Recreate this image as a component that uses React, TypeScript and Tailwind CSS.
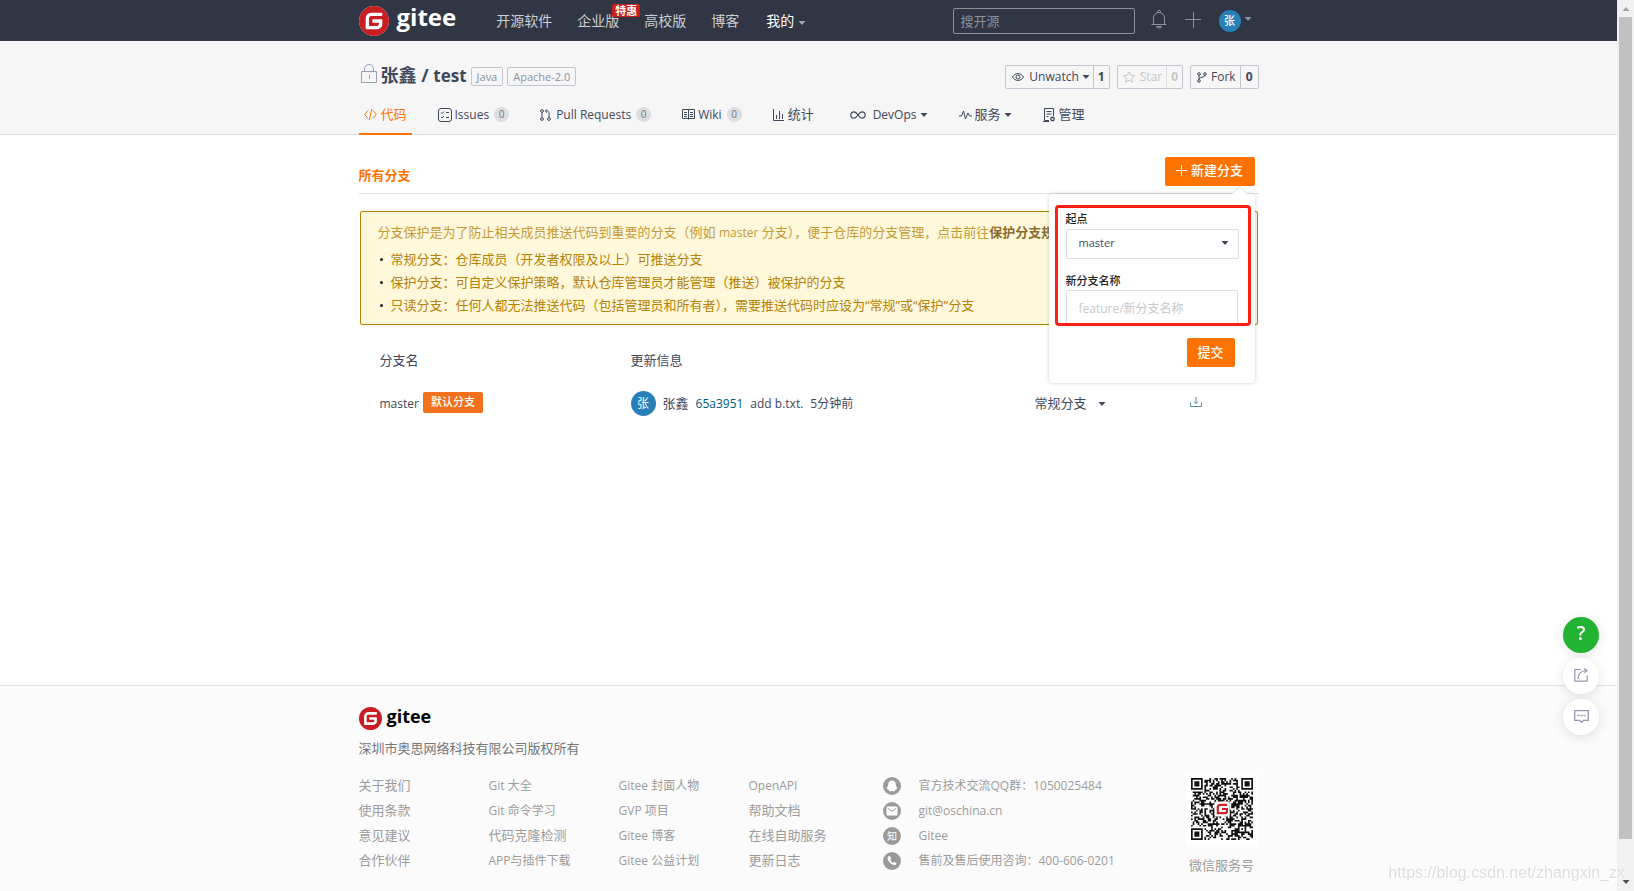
import React from 'react';
import { SiGitee } from 'react-icons/si';

const Caret: React.FC<{ className?: string }> = ({ className = '' }) => (
  <svg viewBox="0 0 8 4" className={`w-[8px] h-[4px] shrink-0 ${className}`} fill="currentColor" aria-hidden="true">
    <path d="M0.5 0h7L4 4z" />
  </svg>
);

type IconProps = { children: React.ReactNode; className?: string; box?: string };

const LineIcon: React.FC<IconProps> = ({ children, className = 'w-[14px] h-[14px]', box = '0 0 14 14' }) => (
  <svg viewBox={box} className={`shrink-0 ${className}`} fill="none" stroke="currentColor" strokeWidth="1" aria-hidden="true">
    {children}
  </svg>
);

const Logo: React.FC<{ mark: string; text: string }> = ({ mark, text }) => (
  <a href="#" className="flex items-center">
    <span className={`flex rounded-full bg-white text-[#c71d23] ${mark}`}>
      <SiGitee className="size-full" />
    </span>
    <span className={text}>gitee</span>
  </a>
);

const TopBar: React.FC = () => (
  <header className="bg-[#303643] text-[#ccced3]">
    <div className="mx-auto flex h-[41px] w-full max-w-[900px] items-center">
      <Logo mark="size-[30px]" text="ml-2 mb-2 text-2xl leading-6 font-bold text-white" />
      <nav className="ml-10 flex flex-1 items-center gap-[25px] text-sm">
        <a href="#">开源软件</a>
        <a href="#" className="relative">
          企业版
          <span className="absolute -top-[7px] left-[35px] rounded-xs bg-[#c71d23] px-[3px] text-[11px] leading-[13px] font-bold whitespace-nowrap text-white">
            特惠
          </span>
        </a>
        <a href="#">高校版</a>
        <a href="#">博客</a>
        <a href="#" className="ml-[2px] flex items-center gap-1 text-white">
          我的
          <Caret className="mt-1 text-[#a0a4ad]" />
        </a>
      </nav>
      <input
        type="text"
        aria-label="搜开源"
        placeholder="搜开源"
        className="h-[26px] w-[182px] rounded-xs border border-[#8c9098] bg-transparent px-[7px] text-[13px] placeholder:text-[#8c9098]"
      />
      <button aria-label="通知" className="ml-4 text-[#8c92a4]">
        <LineIcon className="mb-[2px] h-[19px] w-4" box="0 0 16 19">
          <path d="M.5 14.500h15M2.500 14.500V8a5.500 5.500 0 0 1 11 0v6.500M6.500 2.500V1.500a1.500 1 0 0 1 3 0v1M5.500 16.500a2.500 1.500 0 0 0 5 0z" />
        </LineIcon>
      </button>
      <button aria-label="新建" className="ml-[18px] text-[#8c92a4]">
        <LineIcon className="mb-[2px] size-4" box="0 0 16 16">
          <path d="M8.500 0v16M0 7.500h16" />
        </LineIcon>
      </button>
      <button aria-label="张鑫" className="ml-[18px] mr-[7px] flex items-center gap-[3px]">
        <span className="size-[22px] rounded-full bg-[#2980b9] text-center text-[11px] leading-[22px] font-medium text-white">张</span>
        <Caret className="mb-1 text-[#8c92a4]" />
      </button>
    </div>
  </header>
);

const RepoTitle: React.FC = () => (
  <div className="flex items-center pt-5">
    <LineIcon className="ml-[2px] mb-1 h-[19px] w-4 text-[#9aa0b3]" box="0 0 16 19">
      <path d="M.5 7.500h15v11H.5zM3.500 7.500V5a4.500 4.500 0 0 1 9 0v2.500M8.500 11v4" />
    </LineIcon>
    <h1 className="ml-1 text-lg leading-[26px] font-bold text-[#40485b]">
      <a href="#">张鑫</a> / <a href="#" className="text-[17px]">test</a>
    </h1>
    <span className="mt-[2px] ml-1 h-[19px] rounded-xs border border-[#c3c6d1] px-[5px] text-[11px] leading-[17px] text-[#8c92a4]">Java</span>
    <span className="mt-[2px] ml-1 h-[19px] rounded-xs border border-[#c3c6d1] px-[5px] text-[11px] leading-[17px] text-[#8c92a4]">
      Apache-2.0
    </span>
    <div className="mt-1 ml-auto flex gap-[7px] text-xs text-[#40485b]">
      <button className="flex h-6 items-center rounded-xs border border-[#c3c6d1]">
        <LineIcon className="mr-[5px] ml-[6px] h-2 w-3" box="0 0 12 8">
          <path d="M.5 4C3-.6 9-.6 11.500 4 9 8.600 3 8.600 .5 4z" />
          <circle cx="6" cy="4" r="2" />
        </LineIcon>
        <span>Unwatch</span>
        <Caret className="mx-[3px]" />
        <span className="flex h-full items-center border-l border-[#c3c6d1] px-1 font-bold">1</span>
      </button>
      <button disabled className="flex h-6 items-center rounded-xs border border-[#c3c6d1] text-[#c6c6c6]">
        <LineIcon className="mx-[5px] size-3" box="0 0 12 12">
          <path d="M6 .8l1.600 3.500 3.800.4-2.800 2.600.8 3.800L6 9.200l-3.400 1.900.8-3.800L.6 4.700l3.800-.4z" />
        </LineIcon>
        <span className="mr-1">Star</span>
        <span className="flex h-full items-center border-l border-[#dddee3] px-1 font-bold">0</span>
      </button>
      <button className="flex h-6 items-center rounded-xs border border-[#c3c6d1]">
        <LineIcon className="mr-1 ml-[6px] h-[11px] w-[10px]" box="0 0 10 11">
          <circle cx="2" cy="2" r="1.300" />
          <circle cx="8" cy="2" r="1.300" />
          <circle cx="2" cy="9" r="1.300" />
          <path d="M2 3.300v4.400M8 3.300c0 2.500-6 1.400-6 4" />
        </LineIcon>
        <span className="mr-1">Fork</span>
        <span className="flex h-full items-center border-l border-[#c3c6d1] px-[5px] font-bold">0</span>
      </button>
    </div>
  </div>
);

type Tab = { label: string; icon: React.ReactNode; latin?: boolean; count?: number; menu?: boolean };

const tabs: Tab[] = [
  {
    label: 'Issues',
    latin: true,
    count: 0,
    icon: (
      <LineIcon>
        <rect x=".5" y=".5" width="13" height="13" rx="2.500" />
        <path d="M3 4.500l1 1 2-2M8 4.500h3M3 9l1 1 2-2M8 9.500h3" />
      </LineIcon>
    ),
  },
  {
    label: 'Pull Requests',
    latin: true,
    count: 0,
    icon: (
      <LineIcon className="mr-[2px] h-3 w-[11px]" box="0 0 11 12">
        <circle cx="2" cy="2" r="1.400" />
        <circle cx="2" cy="10" r="1.400" />
        <circle cx="9" cy="10" r="1.400" />
        <path d="M2 3.500v5M9 8.500v-5c0-1-1-1.500-2-1.500H5.500M7 .3L5.300 2 7 3.700" />
      </LineIcon>
    ),
  },
  {
    label: 'Wiki',
    latin: true,
    count: 0,
    icon: (
      <LineIcon className="h-[11px] w-[13px]" box="0 0 13 11">
        <path d="M.5 .5h12v9H.5zM6.500 .5v10M2 3.500h3M2 5.500h3M2 7.500h3M8 3.500h3M8 5.500h3M8 7.500h3" />
      </LineIcon>
    ),
  },
  {
    label: '统计',
    icon: (
      <LineIcon className="mr-[1px] h-3 w-[11px]" box="0 0 11 12">
        <path d="M.5 0v11.500H11M3.500 6v4M6.500 2v8M9.500 5v5" />
      </LineIcon>
    ),
  },
  {
    label: 'DevOps',
    latin: true,
    menu: true,
    icon: (
      <LineIcon className="mr-1 ml-[5px] h-2 w-4" box="0 0 16 8">
        <path d="M8 4C6 1 5 .8 4 .8a3.200 3.200 0 0 0 0 6.400C5 7.200 6 7 8 4s3-3.200 4-3.200a3.200 3.200 0 0 1 0 6.400C11 7.200 10 7 8 4z" strokeWidth="1.200" />
      </LineIcon>
    ),
  },
  {
    label: '服务',
    menu: true,
    icon: (
      <LineIcon className="h-[10px] w-[13px]" box="0 0 13 10">
        <path d="M0 6h2.500l2-5 2 8 2.500-6 1.500 3H13" />
      </LineIcon>
    ),
  },
  {
    label: '管理',
    icon: (
      <LineIcon className="mr-[1px] h-[14px] w-3" box="0 0 12 14">
        <path d="M10.500 8V.5h-9v12H6M3.500 3.500h5M3.500 6h5M3.500 8.500h2M0 13.500h6" />
        <circle cx="9.500" cy="11" r="1.700" strokeWidth="1.400" />
      </LineIcon>
    ),
  },
];

const RepoTabs: React.FC = () => (
  <nav className="mt-[7px] flex text-[13px] text-[#40485b]">
    <a href="#" className="-mb-px flex h-[39px] items-center gap-1 border-b-2 border-[#fe7300] px-[5px] text-[#fe7300]">
      <LineIcon className="h-[11px] w-[13px]" box="0 0 13 11">
        <path d="M4 1.500L.7 5.500 4 9.500M9 1.500l3.300 4L9 9.500M7.800 0L5.200 11" />
      </LineIcon>
      代码
    </a>
    <div className="ml-[26px] flex gap-[31px]">
      {tabs.map((tab) => (
        <a key={tab.label} href="#" className="flex h-[37px] items-center gap-[3px]">
          {tab.icon}
          <span className={tab.latin ? 'text-xs' : ''}>{tab.label}</span>
          {tab.count !== undefined && (
            <span className="ml-[2px] size-[15px] rounded-full bg-[#dddee0] text-center text-[10px] leading-[15px] text-[#72788c]">
              {tab.count}
            </span>
          )}
          {tab.menu && <Caret />}
        </a>
      ))}
    </div>
  </nav>
);

const NewBranchPopup: React.FC = () => (
  <form className="absolute top-[37px] right-0 z-10 w-[206px] rounded-sm bg-white p-4 pt-[17px] pl-[17px] text-[#40485b] shadow-[0_0_4px_rgba(0,0,0,0.18)]">
    <span className="absolute -top-[6px] right-[10px] size-[11px] rotate-45 border-t border-l border-[#dfe2e8] bg-white" />
    <label htmlFor="start" className="block text-[11px] leading-[15px] font-medium text-[#222]">
      起点
    </label>
    <div className="relative mt-[3px]">
      <select
        id="start"
        className="block h-[30px] w-full appearance-none rounded-xs border border-[#dcdde5] bg-white pb-[2px] pl-3 text-[11px]"
      >
        <option>master</option>
      </select>
      <Caret className="pointer-events-none absolute top-3 right-[10px]" />
    </div>
    <label htmlFor="branch-name" className="mt-[14px] block text-[11px] leading-[15px] font-medium text-[#222]">
      新分支名称
    </label>
    <input
      id="branch-name"
      type="text"
      placeholder="feature/新分支名称"
      className="mt-[2px] block h-[36px] w-[172px] rounded-xs border border-[#dcdde5] px-3 text-xs placeholder:text-[#c8c8c8]"
    />
    <div className="pointer-events-none absolute top-[11px] right-1 left-[6px] h-[121px] rounded-sm border-3 border-[#ff1f14]" />
    <button type="button" className="mt-3 mr-1 ml-auto block h-[29px] w-12 rounded-xs bg-[#fe7300] text-[13px] font-medium text-white">
      提交
    </button>
  </form>
);

const rules = [
  '常规分支：仓库成员（开发者权限及以上）可推送分支',
  '保护分支：可自定义保护策略，默认仓库管理员才能管理（推送）被保护的分支',
  '只读分支：任何人都无法推送代码（包括管理员和所有者），需要推送代码时应设为“常规”或“保护”分支',
];

const BranchPage: React.FC = () => (
  <main className="mx-auto w-full max-w-[900px] flex-1 pt-[22px] pb-8 text-[13px] text-[#40485b]">
    <div className="flex items-start justify-between border-b border-[#d9e0e8] pb-[7px]">
      <h2 className="mt-2 leading-5 font-bold text-[#fe7300]">所有分支</h2>
      <div className="relative mr-1">
        <button className="flex h-[29px] w-[90px] items-center justify-center gap-1 rounded-xs bg-[#fe7300] pb-[2px] font-medium text-white">
          <LineIcon className="size-[11px]" box="0 0 11 11">
            <path d="M5.500 0v11M0 5.500h11" />
          </LineIcon>
          新建分支
        </button>
        <NewBranchPopup />
      </div>
    </div>

    <section className="mx-px mt-[17px] rounded-xs border border-[#b58105] bg-[#fff8db] px-[17px] pt-2 pb-[7px] text-[#b58105]">
      <p className="leading-6 text-[#c49a37]">
        分支保护是为了防止相关成员推送代码到重要的分支（例如 <span className="text-xs">master</span> 分支），便于仓库的分支管理，点击前往
        <a href="#" className="font-bold text-[#8c6d2c]">保护分支规则</a>
      </p>
      <ul className="mt-1">
        {rules.map((rule) => (
          <li key={rule} className="flex items-center leading-[23px]">
            <span className="mr-2 ml-[2px] size-[3px] rounded-full bg-[#222]" />
            {rule}
          </li>
        ))}
      </ul>
    </section>

    <table className="mt-[21px] w-full text-left">
      <thead>
        <tr className="h-[30px]">
          <th className="w-[272px] pl-[21px] font-normal">分支名</th>
          <th className="font-normal">更新信息</th>
          <th className="w-[155px]" aria-label="状态" />
          <th className="w-[69px]" aria-label="下载" />
        </tr>
      </thead>
      <tbody>
        <tr className="h-[56px]">
          <td className="pl-[21px]">
            <div className="flex items-center gap-1">
              <a href="#" className="text-xs">master</a>
              <span className="mb-1 h-[21px] rounded-xs bg-[#f2711c] px-2 text-[11px] leading-[20px] font-medium text-white">默认分支</span>
            </div>
          </td>
          <td>
            <div className="flex items-center gap-[7px]">
              <span className="mb-[2px] size-[25px] rounded-full bg-[#2980b9] text-center text-xs leading-[25px] text-white">张</span>
              <a href="#">张鑫</a>
              <a href="#" className="text-xs text-[#005980]">65a3951</a>
              <span className="text-xs">add b.txt.</span>
              <span className="text-xs">5分钟前</span>
            </div>
          </td>
          <td>
            <div className="relative w-[71px]">
              <select aria-label="分支状态" className="w-full appearance-none bg-transparent">
                <option>常规分支</option>
              </select>
              <Caret className="pointer-events-none absolute top-2 right-0" />
            </div>
          </td>
          <td>
            <button aria-label="下载" className="mb-1 block text-[#5b8c9e]">
              <LineIcon className="h-[10px] w-3" box="0 0 12 10">
                <path d="M.5 5.500v4h11v-4M6 0v6.500M4 4.500l2 2 2-2" />
              </LineIcon>
            </button>
          </td>
        </tr>
      </tbody>
    </table>
  </main>
);

const QR_SIZE = 37;

// finder squares sit in three corners, one alignment square in the fourth
const isDark = (x: number, y: number): boolean => {
  const corners = [[3, 3], [QR_SIZE - 4, 3], [3, QR_SIZE - 4]];
  for (const [cx, cy] of corners) {
    const d = Math.max(Math.abs(x - cx), Math.abs(y - cy));
    if (d <= 4) return d === 3 || d <= 1;
  }
  const a = Math.max(Math.abs(x - 30), Math.abs(y - 30));
  if (a <= 2) return a !== 1;
  const n = Math.sin(x * 127.1 + y * 311.7) * 43758.5453;
  return n - Math.floor(n) > 0.48;
};

const QrCode: React.FC = () => {
  let d = '';
  for (let y = 0; y < QR_SIZE; y++) {
    for (let x = 0; x < QR_SIZE; x++) {
      if (isDark(x, y)) d += `M${x} ${y}h1v1h-1z`;
    }
  }
  return (
    <svg viewBox="-3 -3 43 43" className="size-[72px] bg-white" role="img" aria-label="微信服务号">
      <path d={d} fill="#111" />
      <rect x="14" y="14" width="9" height="9" rx="1" fill="#fff" />
      <path d="M21.500 16h-4q-1.500 0-1.500 1.500V21h4q1.500 0 1.500-1.500v-1h-3" fill="none" stroke="#c9252d" strokeWidth="1.300" />
    </svg>
  );
};

const linkColumns = [
  ['关于我们', '使用条款', '意见建议', '合作伙伴'],
  ['Git 大全', 'Git 命令学习', '代码克隆检测', 'APP与插件下载'],
  ['Gitee 封面人物', 'GVP 项目', 'Gitee 博客', 'Gitee 公益计划'],
  ['OpenAPI', '帮助文档', '在线自助服务', '更新日志'],
];

const contacts = [
  {
    text: '官方技术交流QQ群：1050025484',
    icon: <path d="M9 3.500c-2.500 0-3.800 1.800-3.800 4.200 0 1.200-1.400 2.600-1.400 4 0 1 .6.600 1.200 0 .2.900.6 1.400 1 1.700-.8 1 1.600 1.200 3 .5 1.400.7 3.800.5 3-.5.4-.3.800-.8 1-1.700.6.600 1.200 1 1.200 0 0-1.400-1.400-2.800-1.400-4C12.800 5.300 11.500 3.500 9 3.500z" fill="#fff" />,
  },
  {
    text: 'git@oschina.cn',
    icon: (
      <>
        <rect x="3.500" y="4.500" width="11" height="9" rx="1" fill="#fff" />
        <path d="M4.500 6L9 9.300 13.500 6" fill="none" stroke="#9b9b9b" />
      </>
    ),
  },
  { text: 'Gitee', icon: <text x="9" y="13" textAnchor="middle" fontSize="10" fill="#fff">知</text> },
  {
    text: '售前及售后使用咨询：400-606-0201',
    icon: <path d="M5.500 4.200c-1.500.8-1.200 3.600 1 6.100s5.200 3.500 6.400 2.300c.8-.8.6-1.300.2-1.600l-1.500-.9c-.6-.3-1 .3-1.500.7-1-.3-2.500-1.800-2.700-2.800.5-.5 1-.9.7-1.500l-.9-1.700c-.4-.8-.9-.9-1.700-.6z" fill="#fff" />,
  },
];

const Footer: React.FC = () => (
  <footer className="border-t border-[#e4e5e7] bg-[#fbfbfb] text-[13px] text-[#9b9b9b]">
    <div className="mx-auto w-full max-w-[900px] pt-5 pb-4">
      <Logo mark="size-[23px]" text="ml-[5px] mb-1 text-lg leading-5 font-bold text-black" />
      <p className="mt-2 leading-5 text-[#73767a]">深圳市奥思网络科技有限公司版权所有</p>
      <div className="mt-[15px] flex items-start">
        {linkColumns.map((column) => (
          <ul key={column[0]} className="w-[130px] leading-[25px]">
            {column.map((link) => (
              <li key={link}>
                <a href="#" className={/[A-Z]/.test(link) ? 'text-xs leading-[25px]' : ''}>{link}</a>
              </li>
            ))}
          </ul>
        ))}
        <ul className="ml-1 text-xs leading-[25px]">
          {contacts.map((contact) => (
            <li key={contact.text} className="flex items-center gap-[18px]">
              <svg viewBox="0 0 18 18" className="size-[18px]" aria-hidden="true">
                <circle cx="9" cy="9" r="9" fill="#9b9b9b" />
                {contact.icon}
              </svg>
              {contact.text}
            </li>
          ))}
        </ul>
        <div className="mr-px ml-auto text-center">
          <QrCode />
          <p className="mt-[10px] leading-5">微信服务号</p>
        </div>
      </div>
    </div>
  </footer>
);

const roundButton = 'flex size-9 items-center justify-center rounded-full shadow-[0_2px_12px_rgba(0,0,0,0.12)]';

const FloatingTools: React.FC = () => (
  <div className="fixed right-[35px] bottom-[156px] z-20 flex flex-col gap-[5px] text-[#9398ae]">
    <button aria-label="帮助" className={`${roundButton} bg-[#23b332] pb-1 text-[19px] font-semibold text-white`}>?</button>
    <button aria-label="分享" className={`${roundButton} bg-white`}>
      <LineIcon className="mb-[2px] size-[14px]">
        <path d="M7 1.500H.8v11.700h12.400V7.500M4 11C4 6 7 2.500 12.500 2.500M10 .5l3 2-2.500 2.300" strokeWidth="1.200" />
      </LineIcon>
    </button>
    <button aria-label="反馈" className={`${roundButton} bg-white`}>
      <LineIcon className="mb-[2px] h-[13px] w-[15px]" box="0 0 15 13">
        <path d="M.7 .7h13.600v9.600H9.500l-2 2-2-2H.7z" strokeWidth="1.300" />
        <path d="M3.500 5.500h2M6.500 5.500h2M9.500 5.500h2" strokeWidth="1.500" />
      </LineIcon>
    </button>
  </div>
);

const Scrollbar: React.FC = () => (
  <div className="sticky top-0 flex h-screen w-[17px] shrink-0 flex-col items-center bg-[#f1f1f1] text-[#505050]" aria-hidden="true">
    <Caret className="my-[7px] rotate-180 text-[#a3a3a3]" />
    <div className="mt-[-1px] w-[13px] flex-1 bg-[#c1c1c1]" />
    <Caret className="mt-[41px] mb-[7px]" />
  </div>
);

const App: React.FC = () => {
  return (
    <div className="flex min-h-screen bg-white font-['Open_Sans','Noto_Sans_CJK_SC',sans-serif]">
      <div className="flex min-h-screen min-w-0 flex-1 flex-col">
        <TopBar />
        <div className="border-b border-[#dcdddf] bg-[#f6f6f6]">
          <div className="mx-auto w-full max-w-[900px]">
            <RepoTitle />
            <RepoTabs />
          </div>
        </div>
        <BranchPage />
        <Footer />
      </div>
      <Scrollbar />
      <FloatingTools />
      <span className="pointer-events-none fixed right-[9px] bottom-2 z-30 font-['Liberation_Sans',sans-serif] text-base leading-5 text-[#dedede] [text-shadow:1px_1px_0_#fff]">
        https://blog.csdn.net/zhangxin_zx
      </span>
    </div>
  );
};

export default App;
